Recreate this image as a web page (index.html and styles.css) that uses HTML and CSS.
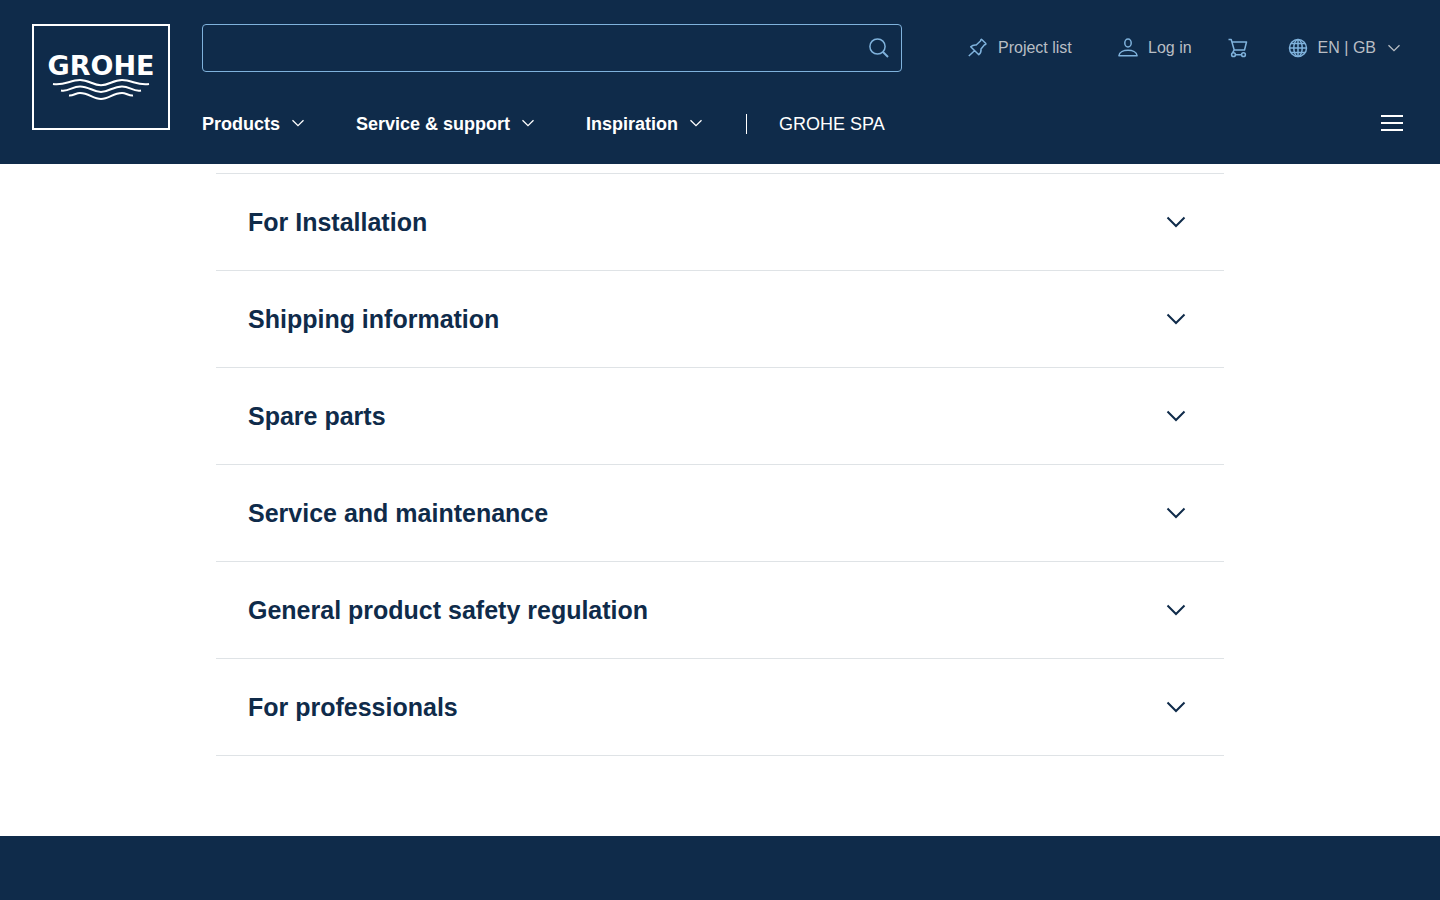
FILE: index.html
```html
<!DOCTYPE html>
<html lang="en-GB">
<head>
    <meta charset="UTF-8">
    <meta name="viewport" content="width=device-width, initial-scale=1.0">
    <title>GROHE</title>
    <link rel="stylesheet" href="styles.css">
</head>
<body>

    <!-- Shared chevron shapes -->
    <svg class="sprite" aria-hidden="true">
        <symbol id="chevron" viewBox="0 0 12 8">
            <path d="M0.5 1.2 L6 6.7 L11.5 1.2"/>
        </symbol>
        <symbol id="chevron-large" viewBox="0 0 20 12">
            <path d="M1.5 1.5 L10 10 L18.5 1.5"/>
        </symbol>
    </svg>

    <header class="header">
        <a href="#" class="logo">
            <span class="logo-name">GROHE</span>
            <svg class="logo-waves" viewBox="0 0 98 22" aria-hidden="true">
                <path d="M1 5 C12 7 18 1 28 1 C37 1 41 6.300 49 6.300 C57 6.300 61 1 70 1 C80 1 86 7 97 5"/>
                <path d="M9 11.500 C17 13 20 7.400 28 7.400 C37 7.400 41 12.900 49 12.900 C57 12.900 61 7.400 70 7.400 C78 7.400 81 13 89 11.500"/>
                <path d="M17 16.500 C21 17 24 14 28 14 C37 14 41 20 49 20 C57 20 61 14 70 14 C74 14 77 17 81 16.500"/>
            </svg>
        </a>

        <div class="header-rows">
            <div class="header-top">
                <form class="search" role="search">
                    <input type="search" class="search-input" aria-label="Search">
                    <button type="submit" class="search-button" aria-label="Search">
                        <svg class="icon" viewBox="0 0 20 20"><circle cx="8.500" cy="8.500" r="7.600"/><path d="M14 14 L19 19" stroke-width="2"/></svg>
                    </button>
                </form>

                <div class="tools">
                    <a href="#" class="tool tool-projects">
                        <svg class="icon" viewBox="0 0 20 20"><path d="M0.800 18 L7 12.200 M2.700 8.800 C4.500 7 6.500 6.800 8.200 7 L12.700 2.800 C12.600 1.500 13.200 1 14 1.700 L17.600 5.300 C18.300 6.100 17.800 6.800 16.500 6.700 L13 11 C13.300 13 12.800 15 10.800 16.700 Z"/></svg>
                        <span>Project list</span>
                    </a>
                    <a href="#" class="tool">
                        <svg class="icon" viewBox="0 0 20 20"><ellipse cx="10" cy="5" rx="3.200" ry="4"/><path d="M0.900 17.800 C1.500 10.500 18.500 10.500 19.100 17.800 Z"/></svg>
                        <span>Log in</span>
                    </a>
                    <a href="#" class="tool tool-cart" aria-label="Shopping cart">
                        <svg class="icon" viewBox="0 0 20 20"><path d="M0.500 1.500 H3.200 L6.200 12 H16.500 L18.500 4 H4 M6.200 12 L4.500 14.800 M7.400 16.700 H13.600"/><circle cx="5.500" cy="16.700" r="1.900"/><circle cx="15.500" cy="16.700" r="1.900"/></svg>
                    </a>
                    <button type="button" class="tool">
                        <svg class="icon" viewBox="0 0 20 20"><circle cx="10" cy="10" r="8.500"/><ellipse cx="10" cy="10" rx="4.200" ry="8.500"/><path d="M10 1.500 V18.500 M1.500 10 H18.500 M3 5.500 H17 M3 14.500 H17"/></svg>
                        <span>EN | GB</span>
                        <svg class="chevron"><use href="#chevron"/></svg>
                    </button>
                </div>
            </div>

            <nav class="nav">
                <button type="button" class="nav-item">Products <svg class="chevron"><use href="#chevron"/></svg></button>
                <button type="button" class="nav-item">Service &amp; support <svg class="chevron"><use href="#chevron"/></svg></button>
                <button type="button" class="nav-item">Inspiration <svg class="chevron"><use href="#chevron"/></svg></button>
                <a href="#" class="nav-link">GROHE SPA</a>
                <button type="button" class="menu-button" aria-label="Menu">
                    <svg viewBox="0 0 22 16"><path d="M0 1 H22 M0 8 H22 M0 15 H22"/></svg>
                </button>
            </nav>
        </div>
    </header>

    <main class="content">
        <div class="accordion">
            <h2 class="accordion-item"><button type="button" class="accordion-button">For Installation <svg class="chevron-large"><use href="#chevron-large"/></svg></button></h2>
            <h2 class="accordion-item"><button type="button" class="accordion-button">Shipping information <svg class="chevron-large"><use href="#chevron-large"/></svg></button></h2>
            <h2 class="accordion-item"><button type="button" class="accordion-button">Spare parts <svg class="chevron-large"><use href="#chevron-large"/></svg></button></h2>
            <h2 class="accordion-item"><button type="button" class="accordion-button">Service and maintenance <svg class="chevron-large"><use href="#chevron-large"/></svg></button></h2>
            <h2 class="accordion-item"><button type="button" class="accordion-button">General product safety regulation <svg class="chevron-large"><use href="#chevron-large"/></svg></button></h2>
            <h2 class="accordion-item"><button type="button" class="accordion-button">For professionals <svg class="chevron-large"><use href="#chevron-large"/></svg></button></h2>
        </div>
    </main>

    <footer class="footer"></footer>

</body>
</html>
```
FILE: styles.css
```css
* {
    box-sizing: border-box;
}

body {
    margin: 0;
    min-height: 100vh;
    display: flex;
    flex-direction: column;
    font-family: "Liberation Sans", Arial, sans-serif;
    color: #0f2b4a;
    background-color: #fff;
}

button {
    padding: 0;
    border: none;
    background: none;
    font: inherit;
    color: inherit;
    cursor: pointer;
}

a {
    color: inherit;
    text-decoration: none;
}

svg {
    flex: none;
    fill: none;
    stroke: currentColor;
}

.sprite {
    display: none;
}

/* Header */
.header {
    display: flex;
    gap: 32px;
    padding: 24px 32px 20px;
    background-color: #0f2b4a;
    color: #fff;
}

.logo {
    flex: none;
    display: flex;
    flex-direction: column;
    align-items: center;
    width: 138px;
    height: 106px;
    padding-top: 26px;
    border: 2px solid #fff;
}

.logo-name {
    font-family: "DejaVu Sans", sans-serif;
    font-size: 27px;
    font-weight: bold;
    line-height: 27px;
}

.logo-waves {
    width: 98px;
    height: 22px;
    stroke-width: 2;
}

.header-rows {
    flex: 1;
}

.header-top {
    display: flex;
    justify-content: space-between;
    gap: 32px;
}

.search {
    flex: 0 1 700px;
    display: flex;
    height: 48px;
    border: 1px solid #7fb2dc;
    border-radius: 4px;
}

.search-input {
    flex: 1;
    min-width: 0;
    padding: 0 16px;
    border: none;
    outline: none;
    background: none;
    font: inherit;
    color: #fff;
}

.search-button {
    display: flex;
    align-items: center;
    padding: 0 12px;
    color: #7fb2dc;
}

.tools {
    display: flex;
    align-items: center;
    gap: 40px;
    padding-right: 8px;
}

.tool {
    display: flex;
    align-items: center;
    gap: 10px;
    font-size: 16px;
    line-height: 24px;
    color: #b9bec4;
    white-space: nowrap;
}

.tool-projects {
    min-width: 110px;
}

.tool-cart {
    margin-left: -4px;
}

.icon {
    width: 20px;
    height: 20px;
    stroke: #7fb2dc;
    stroke-width: 1.5;
    stroke-linejoin: round;
}

.chevron {
    width: 12px;
    height: 8px;
    stroke-width: 1.3;
}

.tool .chevron {
    margin-left: 2px;
}

.nav {
    display: flex;
    align-items: center;
    height: 40px;
    margin-top: 32px;
    font-size: 18px;
    white-space: nowrap;
}

.nav-item {
    display: flex;
    align-items: center;
    gap: 12px;
    margin-right: 52px;
    font-weight: bold;
}

.nav-item .chevron {
    margin-bottom: 2px;
}

.nav-link {
    margin-left: -8px;
    padding-left: 32px;
    border-left: 1px solid #fff;
    line-height: 20px;
}

.menu-button {
    display: flex;
    margin-left: auto;
    padding: 4px 5px 6px;
}

.menu-button svg {
    width: 22px;
    height: 16px;
    stroke-width: 2;
}

/* Product information */
.content {
    padding: 9px 32px 80px;
}

.accordion {
    max-width: 1008px;
    margin: 0 auto;
    border-top: 1px solid #dfe3e6;
}

.accordion-item {
    margin: 0;
    border-bottom: 1px solid #dfe3e6;
    font-size: 25px;
    line-height: 32px;
}

.accordion-button {
    display: flex;
    align-items: center;
    justify-content: space-between;
    width: 100%;
    padding: 32px 38px 32px 32px;
    text-align: left;
}

.chevron-large {
    width: 20px;
    height: 12px;
    stroke-width: 2;
}

.footer {
    flex: 1;
    min-height: 64px;
    background-color: #0f2b4a;
}
```
